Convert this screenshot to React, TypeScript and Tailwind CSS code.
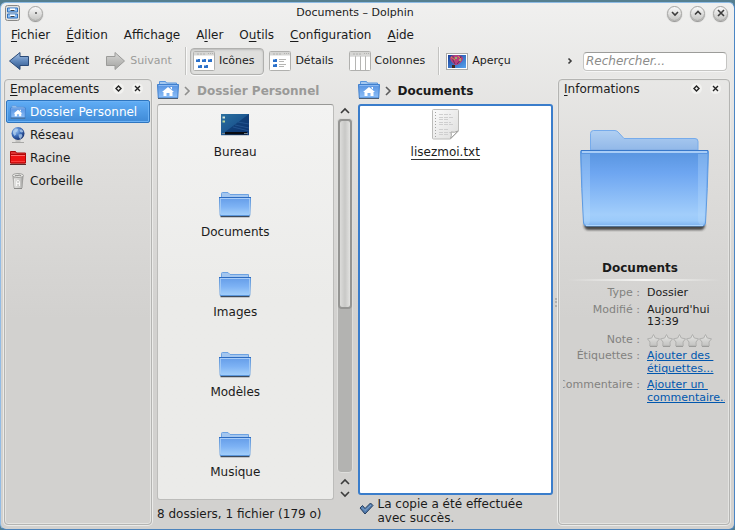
// Dolphin file manager - split view window

import { useState } from "react";
import type { ReactNode } from "react";

type IconProps = { className?: string };

// ---- icons ----

function SmallFolderIcon({ className }: IconProps) {
  return (
    <svg className={className} width="32" height="26" viewBox="0 0 32 26">
      <defs>
        <linearGradient id="smallFolder" x1="0" y1="0" x2="0" y2="1">
          <stop offset="0" stopColor="#649ce8" />
          <stop offset="0.5" stopColor="#7db2f4" />
          <stop offset="1" stopColor="#a4d0fb" />
        </linearGradient>
      </defs>
      <path d="M2.500 6V1.500Q2.500 .5 3.500 .5H9l2 2h18.500v4z" fill="#a3c6ef" stroke="#6da2e2" />
      <path d="M1.500 24.500h29" stroke="#3c4a5c" strokeWidth="1.500" />
      <path d="M.5 5.500h31L30.800 23.500H1.200z" fill="url(#smallFolder)" stroke="#5b97dd" />
      <path d="M0 5.500h32" stroke="#2d6bc0" />
      <path d="M1.500 7v15.500M30.500 7v15.500" stroke="#b4d5fa" strokeOpacity=".7" />
      <path d="M1 6.500h30" stroke="#a9cdf8" />
    </svg>
  );
}

function HomeFolderIcon({ className }: IconProps) {
  return (
    <svg className={className} width="22" height="18" viewBox="0 0 22 18">
      <defs>
        <linearGradient id="homeFolder" x1="0" y1="0" x2="0" y2="1">
          <stop offset="0" stopColor="#5591e0" />
          <stop offset="1" stopColor="#8dc0f9" />
        </linearGradient>
      </defs>
      <path d="M2.500 4V.5h6l1 1.500h10V5z" fill="#a5c8ef" stroke="#5b96dd" />
      <path d="M.5 3.500h21l-.8 13.500H1.300z" fill="url(#homeFolder)" stroke="#3f7fcd" />
      <path d="M1.500 4.500h19" stroke="#8bb8f0" />
      <path d="M1 17.500h20" stroke="#4c6078" />
      <path d="M11 6l6 5h-1.500v4h-3v-3h-3v3h-3v-4H5z" fill="#fff" />
      <path d="M13.500 7V6h1.500v2.500z" fill="#fff" />
    </svg>
  );
}

function GlobeIcon() {
  return (
    <svg width="16" height="16" viewBox="0 0 16 16">
      <defs>
        <radialGradient id="globe" cx=".35" cy=".3" r=".75">
          <stop offset="0" stopColor="#9cc5f2" />
          <stop offset=".5" stopColor="#3f70bd" />
          <stop offset="1" stopColor="#132d6b" />
        </radialGradient>
      </defs>
      <path d="M2 15.500h12M5.500 14h5" stroke="#a8a8a6" />
      <circle cx="8" cy="6.500" r="6.500" fill="url(#globe)" />
      <path d="M3 4l2.500-2.500 2.500 .5-.5 2-2 1.500.5 2-1.500 1.500-1.500-2.500zM9.500 2.500l2.500 0 1.500 2.500-2 .5-1.500-1zM8.500 7.500l3-.5 1 2-2 3-1.500-1.500z" fill="#b5d2ef" fillOpacity=".75" />
    </svg>
  );
}

function RedFolderIcon() {
  return (
    <svg width="16" height="14" viewBox="0 0 16 14">
      <path d="M.5 12V.5h5l1 1.500h9V12z" fill="#e03434" stroke="#a90b0b" />
      <path d="M.5 3.500h15v8.500H.5z" fill="#ee1414" stroke="#b00808" />
      <path d="M1 4.500h14" stroke="#ff6d6d" />
      <path d="M1 10.500h14" stroke="#fb3b3b" />
      <path d="M0 13.500h16" stroke="#5a2a2a" />
    </svg>
  );
}

function TrashIcon() {
  return (
    <svg width="16" height="16" viewBox="0 0 16 16">
      <defs>
        <linearGradient id="trash" x1="0" y1="0" x2="1" y2="0">
          <stop offset="0" stopColor="#9a9a98" />
          <stop offset=".3" stopColor="#dededc" />
          <stop offset=".7" stopColor="#c9c9c7" />
          <stop offset="1" stopColor="#8e8e8c" />
        </linearGradient>
      </defs>
      <path d="M2.500 2.500l1 12.500h9l1-12.500z" fill="url(#trash)" />
      <ellipse cx="8" cy="2.500" rx="5.500" ry="2" fill="#e4e4e1" stroke="#a3a3a1" />
      <path d="M5 3c1-1 2 0 3-.5s2-.5 3 .5" stroke="#7b7b79" fill="none" />
      <path d="M4.500 5.500l.5 8" stroke="#eeeeec" />
      <path d="M6.500 13V8.500L8 7l1.500 1.500V13M6.500 10.500h3" stroke="#f6f6f5" fill="none" />
      <path d="M4 15.500h8" stroke="#8b8b89" />
    </svg>
  );
}

function ArrowIcon({ forward = false }: { forward?: boolean }) {
  const id = forward ? "arrowGrey" : "arrowBlue";
  return (
    <svg width="22" height="20" viewBox="0 0 22 20">
      <defs>
        <linearGradient id={id} x1="0" y1="0" x2="0" y2="1">
          <stop offset="0" stopColor={forward ? "#d9d9d8" : "#a9c4e6"} />
          <stop offset=".5" stopColor={forward ? "#bcbcba" : "#6088bc"} />
          <stop offset="1" stopColor={forward ? "#a3a3a1" : "#2e5488"} />
        </linearGradient>
      </defs>
      <path
        d={
          forward
            ? "M2.500 5.500h8.500V1.500L20.500 10 11 18.500v-4H2.500z"
            : "M20.500 5.500H12V1.500L1.500 10 12 18.500v-4h8.500z"
        }
        fill={`url(#${id})`}
        stroke={forward ? "#9b9b99" : "#2a4a78"}
        strokeLinejoin="round"
      />
    </svg>
  );
}

function ModeFrame({ children }: { children: ReactNode }) {
  return (
    <svg width="22" height="20" viewBox="0 0 22 20">
      <rect x=".5" y=".5" width="21" height="19" rx="1" fill="#fff" stroke="#b0b0ae" />
      <path d="M1 1h20v3.500H1z" fill="#d5d5d3" />
      <path d="M4 3h8M15 2.500h1M17 2.500h1M19 2.500h1" stroke="#b2b2b0" strokeDasharray="2 1" />
      {children}
    </svg>
  );
}

function IconsModeIcon() {
  return (
    <ModeFrame>
      <path d="M3 8h4v3H3zM9 8h4v3H9zM15 8h4v3h-4zM5 14h4v3H5zM11 14h4v3h-4z" fill="#2b70c9" />
      <path d="M3 8.500h2M9 8.500h2M15 8.500h2M5 14.500h2M11 14.500h2" stroke="#7eaee9" />
    </ModeFrame>
  );
}

function DetailsModeIcon() {
  return (
    <ModeFrame>
      <path d="M4 8h4v3H4zM4 13h4v3H4z" fill="#2b70c9" />
      <path d="M4 8.500h2M4 13.500h2" stroke="#7eaee9" />
      <path d="M10 8.500h7M10 10.500h5M10 13.500h7M10 15.500h5" stroke="#b5b5b3" />
    </ModeFrame>
  );
}

function ColumnsModeIcon() {
  return (
    <ModeFrame>
      <path d="M6.500 5v14M11.500 5v14M16.500 5v14" stroke="#b5b5b3" />
      <path d="M1 5h20" stroke="#c4c4c2" />
    </ModeFrame>
  );
}

function PreviewIcon() {
  return (
    <svg width="22" height="17" viewBox="0 0 22 17">
      <defs>
        <linearGradient id="sky" x1="0" y1="0" x2="1" y2="1">
          <stop offset="0" stopColor="#173e99" />
          <stop offset="1" stopColor="#57a4ef" />
        </linearGradient>
      </defs>
      <rect x=".5" y=".5" width="21" height="16" fill="#fff" stroke="#aaaaa8" />
      <path d="M2 2h18v13H2z" fill="url(#sky)" />
      <path d="M4 5q.5-3 6-3t7 3q0 4-6 7H9Q4 8 4 5z" fill="#b8407c" />
      <path d="M7 3q-1 4 2 8M15 3q0 5-4 8" stroke="#5d2c66" fill="none" />
      <path d="M5 4l4 3M12 3l3 3" stroke="#e08a4c" />
      <path d="M9 4h2v2H9zM13 6h2v2h-2z" fill="#93b86a" />
      <path d="M6 12h3v3H6z" fill="#42271b" />
    </svg>
  );
}

function DesktopIcon() {
  return (
    <svg width="28" height="22" viewBox="0 0 28 22">
      <defs>
        <linearGradient id="desktop" x1="0" y1="0" x2="1" y2="1">
          <stop offset="0" stopColor="#2b709f" />
          <stop offset=".55" stopColor="#1b5690" />
          <stop offset="1" stopColor="#123c7c" />
        </linearGradient>
      </defs>
      <path d="M0 0h28v21H0z" fill="url(#desktop)" />
      <path d="M28 0v18H4z" fill="#0a2f68" fillOpacity=".6" />
      <path d="M14 11l14 3M12 13l16 4M17 8l11 2" stroke="#2e62a0" strokeOpacity=".6" />
      <path d="M4 18h22v2.500H4z" fill="#080b12" />
      <path d="M1 19h3v1H1zM23 19h4v1h-4z" fill="#71828f" />
      <path d="M1.500 2.500h2.500v2H1.500z" fill="#d7e7d8" />
      <path d="M1.500 6.500h2.500v2H1.500z" fill="#b6d59a" />
      <path d="M0 21.500h28" stroke="#c4ccd5" />
    </svg>
  );
}

function TextFileIcon() {
  return (
    <svg width="27" height="31" viewBox="0 0 27 31">
      <defs>
        <linearGradient id="paper" x1="0" y1="0" x2="1" y2="1">
          <stop offset="0" stopColor="#fbfbfb" />
          <stop offset="1" stopColor="#dededd" />
        </linearGradient>
      </defs>
      <path d="M1.500 .5h24q1 0 1 1V22l-8 8h-17q-1 0-1-1V1.500q0-1 1-1z" fill="url(#paper)" stroke="#bcbcba" />
      <path d="M3.500 3v25" stroke="#a5a5a3" strokeDasharray="1 2" />
      <path
        d="M7 5.500h12M7 8.500h14M7 10.500h9M7 13.500h12M7 15.500h14M7 20.500h9M7 23.500h12M7 25.500h9"
        stroke="#cfcfcf"
        strokeDasharray="4 1"
      />
      <path d="M18.500 29.500q1.500-3 .5-6.500 3.500 1 7-1z" fill="#fff" stroke="#a6a6a4" />
    </svg>
  );
}

function BigFolderIcon() {
  return (
    <svg width="130" height="104" viewBox="0 0 130 104">
      <defs>
        <linearGradient id="bigBody" x1="0" y1="0" x2="0" y2="1">
          <stop offset="0" stopColor="#5794df" />
          <stop offset=".3" stopColor="#6ea6f1" />
          <stop offset=".85" stopColor="#a2cefb" />
          <stop offset=".93" stopColor="#9bcafa" />
          <stop offset="1" stopColor="#7db2ef" />
        </linearGradient>
        <linearGradient id="bigBack" x1="0" y1="0" x2="0" y2="1">
          <stop offset="0" stopColor="#b0cff2" />
          <stop offset=".8" stopColor="#94bae9" />
          <stop offset="1" stopColor="#5e92d5" />
        </linearGradient>
        <filter id="soft" x="-10%" y="-100%" width="120%" height="300%">
          <feGaussianBlur stdDeviation="1" />
        </filter>
      </defs>
      <path d="M5 94h121v2q-1 4-4 4H9q-3 0-4-4z" fill="#2e2e2e" fillOpacity=".85" filter="url(#soft)" />
      <path d="M11.500 23V3.500q0-3 3-3H36q2 0 4 2.500l5 5.500h71q3 0 3 3V23z" fill="url(#bigBack)" stroke="#76abeb" />
      <path d="M1.500 21.500q0-1 1-1h126q1 0 1 1Q128.500 60 126.500 93q-.5 3-3 3H7.500q-2.500 0-3-3Q2.500 60 1.500 21.500z" fill="url(#bigBody)" stroke="#5d9ae0" />
      <path d="M2.500 24H11v65q0 6-3 6-2.500 0-3-5zM128.500 24H119v65q0 6 4 6 2 0 2.500-5z" fill="#bcdcfc" fillOpacity=".32" />
      <path d="M2 20.500h127" stroke="#3878ca" />
      <path d="M3 22h125" stroke="#a8cdf7" strokeWidth="2" />
      <path d="M7 95.500h117" stroke="#add6ff" />
    </svg>
  );
}

function CheckIcon() {
  return (
    <svg className="mt-[5px] shrink-0" width="15" height="13" viewBox="0 0 15 13">
      <path d="M1 6l2.500-2.500L6 6.500l5.500-5.500L14 3.500l-8 8.500z" fill="#537caf" stroke="#243d5e" strokeLinejoin="round" />
      <path d="M3 5.500L6 8.500 12 3" stroke="#7fa3ca" fill="none" />
    </svg>
  );
}

function StarIcon() {
  return (
    <svg width="13" height="13" viewBox="0 0 13 13">
      <defs>
        <linearGradient id="star" x1="0" y1="0" x2="0" y2="1">
          <stop offset="0" stopColor="#e6e6e4" />
          <stop offset="1" stopColor="#c2c2c0" />
        </linearGradient>
      </defs>
      <path
        d="M6.500 .5l1.800 3.500 4.200.8-2.500 3.200.2 4H2.800l.2-4L.5 4.800l4.200-.8z"
        fill="url(#star)"
        stroke="#b0b0ae"
        strokeLinejoin="round"
      />
      <path d="M3 12.500h7" stroke="#9c9c9a" />
    </svg>
  );
}

function Chevron({ d, color = "#3c3c3c" }: { d: string; color?: string }) {
  return (
    <svg width="10" height="10" viewBox="0 0 10 10" className="shrink-0">
      <path d={d} fill="none" stroke={color} strokeWidth="1.6" />
    </svg>
  );
}

const UP = "M1 7l4-4 4 4";
const DOWN = "M1 3l4 4 4-4";
const RIGHT = "M3 1l4 4-4 4";

// ---- data ----

const menus = [
  ["", "F", "ichier"],
  ["", "É", "dition"],
  ["Afficha", "g", "e"],
  ["A", "l", "ler"],
  ["O", "u", "tils"],
  ["", "C", "onfiguration"],
  ["", "A", "ide"],
];

const places = [
  { name: "Dossier Personnel", icon: <HomeFolderIcon className="h-[14px] w-4" /> },
  { name: "Réseau", icon: <GlobeIcon /> },
  { name: "Racine", icon: <RedFolderIcon /> },
  { name: "Corbeille", icon: <TrashIcon /> },
];

const folders = ["Bureau", "Documents", "Images", "Modèles", "Musique"];

// ---- parts ----

function Underlined({ parts }: { parts: string[] }) {
  return (
    <span>
      {parts[0]}
      <span className="underline underline-offset-2">{parts[1]}</span>
      {parts[2]}
    </span>
  );
}

function RoundButton({ label, children }: { label: string; children: ReactNode }) {
  return (
    <button
      aria-label={label}
      className="flex size-[15px] items-center justify-center rounded-full border border-[#a5a5a3] bg-linear-to-b from-[#fafafa] to-[#c6c6c4] shadow-[0_1px_1px_#8f8f8d]"
    >
      {children}
    </button>
  );
}

function ToolButton({
  label,
  icon,
  checked = false,
  disabled = false,
  onClick,
}: {
  label: string;
  icon: ReactNode;
  checked?: boolean;
  disabled?: boolean;
  onClick?: () => void;
}) {
  return (
    <button
      disabled={disabled}
      onClick={onClick}
      className={`flex h-[27px] shrink-0 items-center gap-1 rounded border pr-[9px] pl-[2px] text-[11px] disabled:text-[#9c9c9a] ${
        checked
          ? "border-[#b0b0ae] bg-[#dfdfdd] shadow-[inset_0_1px_2px_#bababa,0_1px_0_#f8f8f8]"
          : "border-transparent"
      }`}
    >
      {icon}
      {label}
    </button>
  );
}

function Separator() {
  return <div className="mx-[1px] h-7 w-[2px] border-r border-l border-r-white/70 border-l-[#c3c3c1]" />;
}

function Dock({ title, className, children }: { title: string; className: string; children: ReactNode }) {
  return (
    <aside
      className={`flex shrink-0 flex-col rounded border border-[#b4b4b2] shadow-[0_0_0_1px_#ebebe9,inset_0_0_0_1px_#e4e4e2] ${className}`}
    >
      <div className="flex h-5 items-center pr-2 pb-[3px] pl-[5px]">
        <h2 className="flex-1">
          <Underlined parts={["", title[0], title.slice(1)]} />
        </h2>
        <button aria-label="Détacher" className="mr-2 flex size-[11px] items-center justify-center rounded-full bg-[#f2f2f0]">
          <svg width="7" height="7" viewBox="0 0 7 7">
            <path d="M3.500 1L6 3.500 3.500 6 1 3.500z" fill="none" stroke="#222" strokeWidth="1.400" />
          </svg>
        </button>
        <button aria-label="Fermer" className="flex size-[11px] items-center justify-center rounded-full bg-[#f2f2f0]">
          <svg width="7" height="7" viewBox="0 0 7 7">
            <path d="M1 1l5 5M6 1L1 6" stroke="#222" strokeWidth="1.400" />
          </svg>
        </button>
      </div>
      {children}
    </aside>
  );
}

function Breadcrumb({ name, active = false }: { name: string; active?: boolean }) {
  return (
    <nav className="flex h-[25px] items-center pb-[3px] font-bold">
      <button aria-label="Dossier Personnel">
        <HomeFolderIcon />
      </button>
      <span className="ml-[3px] flex pt-[1px]">
        <Chevron d={RIGHT} color={active ? "#5c5c5c" : "#8f8f8d"} />
      </span>
      <a href="#" className={`ml-[5px] pt-[2px] ${active ? "" : "text-[#9a9a98]"}`}>
        {name}
      </a>
    </nav>
  );
}

function ScrollBar() {
  return (
    <div className="ml-[3px] flex w-4 flex-col items-center">
      <button aria-label="Défiler vers le haut" className="flex h-[14px] items-center">
        <Chevron d={UP} />
      </button>
      <div className="flex w-4 flex-1 flex-col rounded border border-[#dededc] bg-[#b3b3b1]">
        <div className="h-[190px] rounded border-2 border-[#959593] bg-linear-to-r from-[#dcdcda] via-[#c8c8c6] to-[#e3e3e1]" />
      </div>
      <button aria-label="Page précédente" className="mt-[3px] flex h-[12px] items-center">
        <Chevron d={UP} />
      </button>
      <button aria-label="Défiler vers le bas" className="flex h-[12px] items-center">
        <Chevron d={DOWN} />
      </button>
    </div>
  );
}

function InfoRow({ label, className, children }: { label: string; className: string; children: ReactNode }) {
  return (
    <div className={`flex gap-[7px] ${className}`}>
      <dt className="flex w-[77px] shrink-0 justify-end overflow-hidden whitespace-nowrap text-[#82827f]">
        {label} :
      </dt>
      <dd className="min-w-0 flex-1 overflow-hidden whitespace-pre">{children}</dd>
    </div>
  );
}

export default function App() {
  const [mode, setMode] = useState("Icônes");
  const [place, setPlace] = useState("Dossier Personnel");
  const [search, setSearch] = useState("");

  return (
    <div className="flex min-h-screen flex-col bg-[#557f90] pt-[2px] font-['DejaVu_Sans',sans-serif] text-[12px] leading-[14px] text-[#1b1b1b]">
      <div className="flex flex-1 flex-col rounded-md border border-t-[#8dbbe5] border-r-[#4b86c4] border-b-[#4c83bc] border-l-[#92bce6] bg-linear-to-b from-[#f0f0ef] via-[#dfdedc] via-30% to-[#d2d1cf] to-60% pr-1 pb-1 pl-[3px]">
        {/* title bar */}
        <header className="flex h-5 items-center gap-2 pr-[2px] pl-[1px] text-[11px]">
          <svg width="15" height="16" viewBox="0 0 15 16">
            <rect x=".5" y=".5" width="14" height="15" rx="2" fill="#e3e3e1" stroke="#888886" />
            <path d="M2.500 3h10v4h-10zM2.500 9h10v4h-10z" fill="#8fc0f4" stroke="#2f70bd" />
            <path d="M5 4.500h5M5 10.500h5" stroke="#fff" strokeWidth="2" />
            <path d="M5.500 5.500h4M5.500 11.500h4" stroke="#37414e" />
          </svg>
          <RoundButton label="Sur tous les bureaux">
            <span className="size-[2px] rounded-full bg-[#555]" />
          </RoundButton>
          <h1 className="flex-1 text-center">Documents – Dolphin</h1>
          <div className="flex gap-2">
            <RoundButton label="Réduire">
              <Chevron d="M2 4l3 3 3-3" />
            </RoundButton>
            <RoundButton label="Agrandir">
              <Chevron d="M2 6.500l3-3 3 3" />
            </RoundButton>
            <RoundButton label="Fermer la fenêtre">
              <Chevron d="M2 2l6 6M8 2L2 8" />
            </RoundButton>
          </div>
        </header>

        {/* menu bar */}
        <nav className="flex h-[23px] items-center gap-4 pl-[7px]">
          {menus.map((m) => (
            <button key={m.join("")}>
              <Underlined parts={m} />
            </button>
          ))}
        </nav>

        {/* tool bar */}
        <div className="flex h-[29px] items-center gap-[2px] pt-[1px] pl-[1px]">
          <ToolButton label="Précédent" icon={<ArrowIcon />} />
          <ToolButton label="Suivant" icon={<ArrowIcon forward />} disabled />
          <Separator />
          <ToolButton label="Icônes" icon={<IconsModeIcon />} checked={mode === "Icônes"} onClick={() => setMode("Icônes")} />
          <ToolButton label="Détails" icon={<DetailsModeIcon />} checked={mode === "Détails"} onClick={() => setMode("Détails")} />
          <ToolButton label="Colonnes" icon={<ColumnsModeIcon />} checked={mode === "Colonnes"} onClick={() => setMode("Colonnes")} />
          <Separator />
          <ToolButton label="Aperçu" icon={<PreviewIcon />} />
          <div className="ml-auto flex items-center gap-2 pr-[3px]">
            <Chevron d="M3.500 2.500L6 5 3.500 7.500" />
            <input
              type="text"
              aria-label="Rechercher"
              placeholder="Rechercher..."
              value={search}
              onChange={(e) => setSearch(e.target.value)}
              className="h-[19px] w-36 rounded border border-[#c5c5c3] border-t-[#9c9c9a] bg-white px-[2px] italic shadow-[0_1px_0_#f6f6f6] outline-none placeholder:text-[#8c8c8a]"
            />
          </div>
        </div>

        <main className="mt-1 flex flex-1">
          {/* places */}
          <Dock title="Emplacements" className="w-[148px]">
            <ul className="px-[1px]">
              {places.map((p) => (
                <li key={p.name}>
                  <button
                    onClick={() => setPlace(p.name)}
                    className={`flex h-[23px] w-full items-center gap-1 rounded-xs border pl-[3px] ${
                      place === p.name
                        ? "border-[#2e75bf] bg-linear-to-b from-[#60adf6] to-[#3f8ad6] text-white shadow-[inset_0_0_0_1px_#6cb2f5]"
                        : "border-transparent"
                    }`}
                  >
                    {p.icon}
                    {p.name}
                  </button>
                </li>
              ))}
            </ul>
          </Dock>

          {/* left view */}
          <section className="ml-[5px] flex min-w-0 flex-1 flex-col">
            <Breadcrumb name="Dossier Personnel" />
            <div className="flex flex-1">
              <ul className="flex flex-1 flex-col gap-[30px] rounded-[3px] border border-[#bcbcba] border-t-[#989896] bg-linear-to-b from-[#f3f3f2] to-[#ebebe9] to-50% pt-1 pr-5">
                {folders.map((f) => (
                  <li key={f} className="flex flex-col items-center">
                    <span className="flex h-8 items-center">
                      {f === "Bureau" ? <DesktopIcon /> : <SmallFolderIcon />}
                    </span>
                    <span className="mt-1">{f}</span>
                  </li>
                ))}
              </ul>
              <ScrollBar />
            </div>
            <p className="flex h-[25px] items-center pt-[2px]">8 dossiers, 1 fichier (179 o)</p>
          </section>

          {/* right view */}
          <section className="ml-[5px] flex min-w-0 flex-1 flex-col">
            <Breadcrumb name="Documents" active />
            <ul className="flex-1 rounded-[3px] border-2 border-[#3a7dcb] bg-white pr-5">
              <li className="flex flex-col items-center pt-[3px]">
                <TextFileIcon />
                <span className="mt-[5px] border-b border-[#333]">lisezmoi.txt</span>
              </li>
            </ul>
            <p className="flex h-[30px] gap-1 pt-[2px] pl-[1px]">
              <CheckIcon />
              <span>La copie a été effectuée avec succès.</span>
            </p>
          </section>

          <div className="flex w-[5px] shrink-0 items-center justify-center">
            <span className="h-[9px] border-l-2 border-dotted border-[#b0b0ae]" />
          </div>

          {/* information panel */}
          <Dock title="Informations" className="w-[172px]">
            <div className="flex justify-center pt-[30px]">
              <BigFolderIcon />
            </div>
            <h3 className="mt-[27px] pr-2 text-center font-bold">Documents</h3>
            <hr className="mx-2 mt-1 h-[2px] border-0 bg-linear-to-r from-transparent via-[#f4f4f2] to-transparent" />
            <dl className="mt-[6px] pr-1 pl-1 text-[11px] leading-[12px]">
              <InfoRow label="Type" className="mb-[5px]">
                Dossier
              </InfoRow>
              <InfoRow label="Modifié" className="mb-[6px]">
                {"Aujourd'hui\n13:39"}
              </InfoRow>
              <InfoRow label="Note" className="mb-[2px]">
                <span className="flex" aria-label="0 sur 5">
                  {[1, 2, 3, 4, 5].map((n) => (
                    <StarIcon key={n} />
                  ))}
                </span>
              </InfoRow>
              <InfoRow label="Étiquettes" className="mb-[3px] leading-[13px]">
                <a href="#" className="text-[#0057ae] underline">
                  {"Ajouter des \nétiquettes..."}
                </a>
              </InfoRow>
              <InfoRow label="Commentaire" className="leading-[13px]">
                <a href="#" className="text-[#0057ae] underline">
                  {"Ajouter un \ncommentaire..."}
                </a>
              </InfoRow>
            </dl>
          </Dock>
        </main>
      </div>
    </div>
  );
}
